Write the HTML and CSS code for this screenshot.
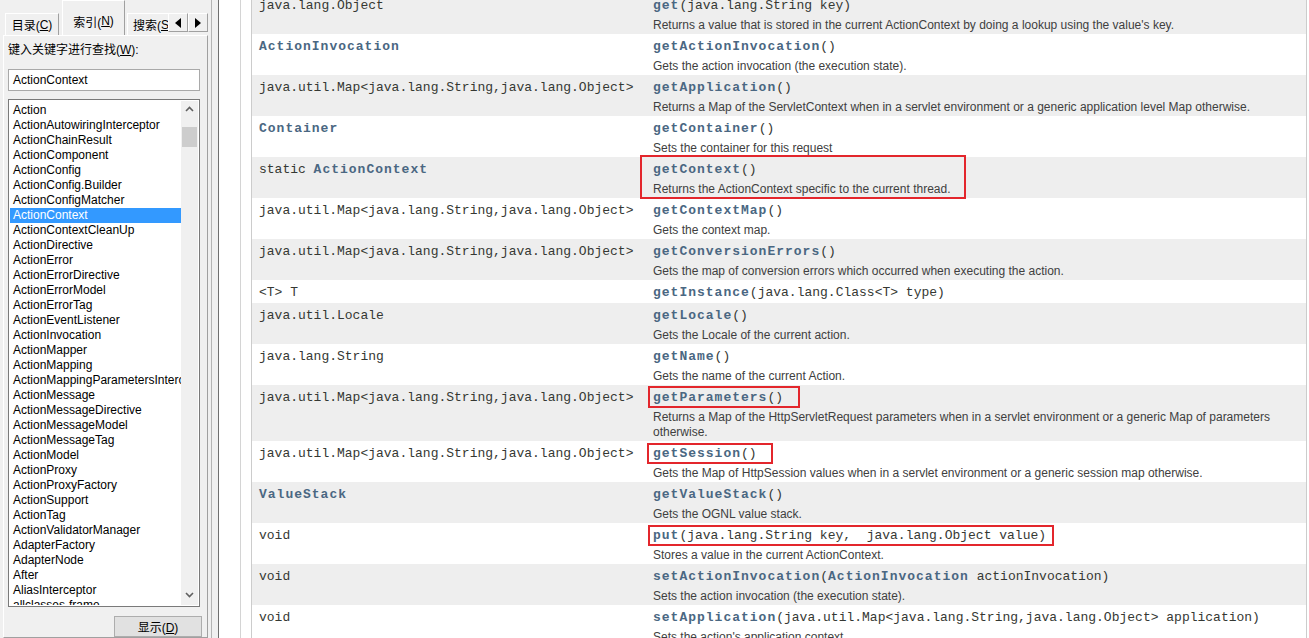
FILE: index.html
```html
<!DOCTYPE html>
<html lang="zh-CN">
<head>
  <meta charset="UTF-8" />
  <title>ActionContext - 帮助</title>
  <link rel="stylesheet" href="styles.css">
</head>
<body>
  <div class="sidebar">
    <div class="tabs">
      <div class="tab">目录(<u>C</u>)</div>
      <div class="tab active">索引(<u>N</u>)</div>
      <div class="tab clipped">搜索(<u>S</u>)</div>
      <div class="tab-arrows">
        <span class="arrow-btn"><svg width="8" height="10" viewBox="0 0 8 10"><polygon points="7,0 7,10 1,5" fill="#000"/></svg></span>
        <span class="arrow-btn"><svg width="8" height="10" viewBox="0 0 8 10"><polygon points="1,0 1,10 7,5" fill="#000"/></svg></span>
      </div>
    </div>
    <div class="panel">
      <div class="label">键入关键字进行查找(<u>W</u>):</div>
      <div class="input">ActionContext</div>
      <div class="listbox">
        <ul class="items">
          <li>Action</li>
          <li>ActionAutowiringInterceptor</li>
          <li>ActionChainResult</li>
          <li>ActionComponent</li>
          <li>ActionConfig</li>
          <li>ActionConfig.Builder</li>
          <li>ActionConfigMatcher</li>
          <li class="selected">ActionContext</li>
          <li>ActionContextCleanUp</li>
          <li>ActionDirective</li>
          <li>ActionError</li>
          <li>ActionErrorDirective</li>
          <li>ActionErrorModel</li>
          <li>ActionErrorTag</li>
          <li>ActionEventListener</li>
          <li>ActionInvocation</li>
          <li>ActionMapper</li>
          <li>ActionMapping</li>
          <li>ActionMappingParametersInterceptor</li>
          <li>ActionMessage</li>
          <li>ActionMessageDirective</li>
          <li>ActionMessageModel</li>
          <li>ActionMessageTag</li>
          <li>ActionModel</li>
          <li>ActionProxy</li>
          <li>ActionProxyFactory</li>
          <li>ActionSupport</li>
          <li>ActionTag</li>
          <li>ActionValidatorManager</li>
          <li>AdapterFactory</li>
          <li>AdapterNode</li>
          <li>After</li>
          <li>AliasInterceptor</li>
          <li>allclasses-frame</li>
        </ul>
        <div class="scrollbar">
          <div class="sb-btn"><svg width="17" height="17" viewBox="0 0 17 17"><polyline points="5,10 8.5,6.5 12,10" fill="none" stroke="#606060" stroke-width="1.6"/></svg></div>
          <div class="sb-thumb"></div>
          <div class="sb-btn sb-down"><svg width="17" height="17" viewBox="0 0 17 17"><polyline points="5,7 8.5,10.5 12,7" fill="none" stroke="#606060" stroke-width="1.6"/></svg></div>
        </div>
      </div>
      <button class="show-btn">显示(<u>D</u>)</button>
    </div>
  </div>

  <div class="splitter"></div>

  <div class="content">
    <div class="frame">
      <table class="summary">
        <tr class="alt">
          <td class="type"><div class="code">java.lang.Object</div></td>
          <td class="method">
            <div class="code"><b>get</b>(java.lang.String key)</div>
            <div class="desc">Returns a value that is stored in the current ActionContext by doing a lookup using the value's key.</div>
          </td>
        </tr>
        <tr>
          <td class="type"><div class="code"><b>ActionInvocation</b></div></td>
          <td class="method">
            <div class="code"><b>getActionInvocation</b>()</div>
            <div class="desc">Gets the action invocation (the execution state).</div>
          </td>
        </tr>
        <tr class="alt">
          <td class="type"><div class="code">java.util.Map&lt;java.lang.String,java.lang.Object&gt;</div></td>
          <td class="method">
            <div class="code"><b>getApplication</b>()</div>
            <div class="desc">Returns a Map of the ServletContext when in a servlet environment or a generic application level Map otherwise.</div>
          </td>
        </tr>
        <tr>
          <td class="type"><div class="code"><b>Container</b></div></td>
          <td class="method">
            <div class="code"><b>getContainer</b>()</div>
            <div class="desc">Sets the container for this request</div>
          </td>
        </tr>
        <tr class="alt">
          <td class="type"><div class="code">static <b>ActionContext</b></div></td>
          <td class="method">
            <div class="code"><b>getContext</b>()</div>
            <div class="desc">Returns the ActionContext specific to the current thread.</div>
            <span class="mark mark-context"></span>
          </td>
        </tr>
        <tr>
          <td class="type"><div class="code">java.util.Map&lt;java.lang.String,java.lang.Object&gt;</div></td>
          <td class="method">
            <div class="code"><b>getContextMap</b>()</div>
            <div class="desc">Gets the context map.</div>
          </td>
        </tr>
        <tr class="alt">
          <td class="type"><div class="code">java.util.Map&lt;java.lang.String,java.lang.Object&gt;</div></td>
          <td class="method">
            <div class="code"><b>getConversionErrors</b>()</div>
            <div class="desc">Gets the map of conversion errors which occurred when executing the action.</div>
          </td>
        </tr>
        <tr>
          <td class="type"><div class="code">&lt;T&gt; T</div></td>
          <td class="method">
            <div class="code"><b>getInstance</b>(java.lang.Class&lt;T&gt; type)</div>
          </td>
        </tr>
        <tr class="alt">
          <td class="type"><div class="code">java.util.Locale</div></td>
          <td class="method">
            <div class="code"><b>getLocale</b>()</div>
            <div class="desc">Gets the Locale of the current action.</div>
          </td>
        </tr>
        <tr>
          <td class="type"><div class="code">java.lang.String</div></td>
          <td class="method">
            <div class="code"><b>getName</b>()</div>
            <div class="desc">Gets the name of the current Action.</div>
          </td>
        </tr>
        <tr class="alt">
          <td class="type"><div class="code">java.util.Map&lt;java.lang.String,java.lang.Object&gt;</div></td>
          <td class="method">
            <div class="code"><b>getParameters</b>()</div>
            <div class="desc">Returns a Map of the HttpServletRequest parameters when in a servlet environment or a generic Map of parameters otherwise.</div>
            <span class="mark mark-params"></span>
          </td>
        </tr>
        <tr>
          <td class="type"><div class="code">java.util.Map&lt;java.lang.String,java.lang.Object&gt;</div></td>
          <td class="method">
            <div class="code"><b>getSession</b>()</div>
            <div class="desc">Gets the Map of HttpSession values when in a servlet environment or a generic session map otherwise.</div>
            <span class="mark mark-session"></span>
          </td>
        </tr>
        <tr class="alt">
          <td class="type"><div class="code"><b>ValueStack</b></div></td>
          <td class="method">
            <div class="code"><b>getValueStack</b>()</div>
            <div class="desc">Gets the OGNL value stack.</div>
          </td>
        </tr>
        <tr>
          <td class="type"><div class="code">void</div></td>
          <td class="method">
            <div class="code"><b>put</b>(java.lang.String key,&nbsp; java.lang.Object value)</div>
            <div class="desc">Stores a value in the current ActionContext.</div>
            <span class="mark mark-put"></span>
          </td>
        </tr>
        <tr class="alt">
          <td class="type"><div class="code">void</div></td>
          <td class="method">
            <div class="code"><b>setActionInvocation</b>(<b>ActionInvocation</b> actionInvocation)</div>
            <div class="desc">Sets the action invocation (the execution state).</div>
          </td>
        </tr>
        <tr>
          <td class="type"><div class="code">void</div></td>
          <td class="method">
            <div class="code"><b>setApplication</b>(java.util.Map&lt;java.lang.String,java.lang.Object&gt; application)</div>
            <div class="desc">Sets the action's application context.</div>
          </td>
        </tr>
      </table>
    </div>
  </div>
</body>
</html>
```

FILE: styles.css
```css
body {
  margin: 0;
  height: 638px;
  overflow: hidden;
  display: flex;
  font-family: "Liberation Sans", "Noto Sans CJK SC", sans-serif;
  font-size: 12px;
  color: #000;
  background: #fff;
}

/* left help pane */
.sidebar {
  width: 211px;
  flex: none;
  display: flex;
  flex-direction: column;
  background: #f0f0f0;
}

.tabs {
  height: 35px;
  display: flex;
  align-items: flex-end;
  padding-left: 5px;
  flex: none;
}

.tab {
  height: 22px;
  width: 54px;
  box-sizing: border-box;
  border: 1px solid;
  border-color: #fff #a0a0a0 transparent #fff;
  border-bottom: none;
  display: flex;
  align-items: center;
  justify-content: center;
  white-space: nowrap;
}

.tab.active {
  height: 35px;
  width: 63px;
  margin-left: 3px;
  padding-top: 6px;
}

.tab.clipped {
  flex: 1;
  width: auto;
  min-width: 0;
  margin-left: 2px;
  justify-content: flex-start;
  padding-left: 5px;
  overflow: hidden;
  border-right: none;
}

.tab-arrows {
  display: flex;
  align-self: flex-start;
  margin-top: 13px;
  margin-right: 3px;
}

.arrow-btn {
  width: 20px;
  height: 19px;
  box-sizing: border-box;
  border: 1px solid;
  border-color: #fff #a0a0a0 #a0a0a0 #fff;
  background: #f0f0f0;
  display: flex;
  align-items: center;
  justify-content: center;
}

.panel {
  flex: 1;
  display: flex;
  flex-direction: column;
  margin: 0 3px;
  border: 1px solid;
  border-color: #fff #a0a0a0 #a0a0a0 #fff;
  padding: 7px 7px 0 4px;
  min-height: 0;
}

.label {
  line-height: 15px;
  white-space: nowrap;
}

.input {
  margin-top: 11px;
  height: 22px;
  box-sizing: border-box;
  border: 1px solid #a9a9a9;
  background: #fff;
  padding-left: 4px;
  line-height: 20px;
}

.listbox {
  margin-top: 8px;
  height: 508px;
  flex: none;
  box-sizing: border-box;
  border: 1px solid #7a7a7a;
  padding: 1px;
  background: #fff;
  display: flex;
}

.items {
  flex: 1;
  list-style: none;
  margin: 0;
  padding: 2px 0 0 0;
  overflow: hidden;
  min-width: 0;
}

.items li {
  height: 15px;
  line-height: 15px;
  padding-left: 3px;
  white-space: nowrap;
}

.items li.selected {
  background: #3399ff;
  color: #fff;
}

.scrollbar {
  width: 17px;
  flex: none;
  background: #f0f0f0;
  display: flex;
  flex-direction: column;
}

.sb-btn {
  height: 17px;
}

.sb-down {
  margin-top: auto;
  margin-bottom: 2px;
}

.sb-thumb {
  margin: 9px 1px 0;
  height: 20px;
  background: #cdcdcd;
}

.show-btn {
  margin: 9px -2px 0 auto;
  width: 88px;
  height: 25px;
  font: inherit;
  background: #e1e1e1;
  border: 1px solid #adadad;
  padding: 0;
}

.splitter {
  width: 6px;
  flex: none;
  background: #f0f0f0;
  border-left: 1px solid #b4b4b4;
  border-right: 1px solid #6f6f6f;
}

/* right content frame */
.content {
  flex: 1;
  display: flex;
  padding-left: 21px;
  overflow: hidden;
  background: #fff;
}

.frame {
  flex: 1;
  border-left: 1px solid #d4d4d4;
  padding: 0 2px 0 10px;
  min-width: 0;
}

.summary {
  width: 100%;
  margin-top: -7px;
  border-collapse: collapse;
  border-left: 1px solid #cccccc;
  border-right: 1px solid #cccccc;
}

.summary tr {
  background: #fff;
}

.summary tr.alt {
  background: #eeeeee;
}

.summary td {
  vertical-align: top;
  padding: 3px 0 1px 0;
}

.summary td.type {
  width: 386px;
  padding-left: 7px;
}

.summary td.method {
  position: relative;
  padding-left: 8px;
}

.code {
  font-family: "Liberation Mono", monospace;
  font-size: 13px;
  line-height: 19px;
  color: #353833;
  white-space: nowrap;
}

.code b {
  color: #4a6782;
  letter-spacing: 1px;
}

.desc {
  margin-top: 3px;
  font-size: 12px;
  line-height: 15px;
  color: #404040;
}

/* red highlight boxes drawn over the rows */
.mark {
  position: absolute;
  box-sizing: border-box;
  border: 2px solid #e3262c;
}

.mark-context {
  left: -5px;
  top: -2px;
  width: 326px;
  height: 44px;
}

.mark-params {
  left: 3px;
  top: 1px;
  width: 152px;
  height: 22px;
}

.mark-session {
  left: 2px;
  top: 2px;
  width: 126px;
  height: 21px;
}

.mark-put {
  left: 3px;
  top: 2px;
  width: 406px;
  height: 21px;
}
```
